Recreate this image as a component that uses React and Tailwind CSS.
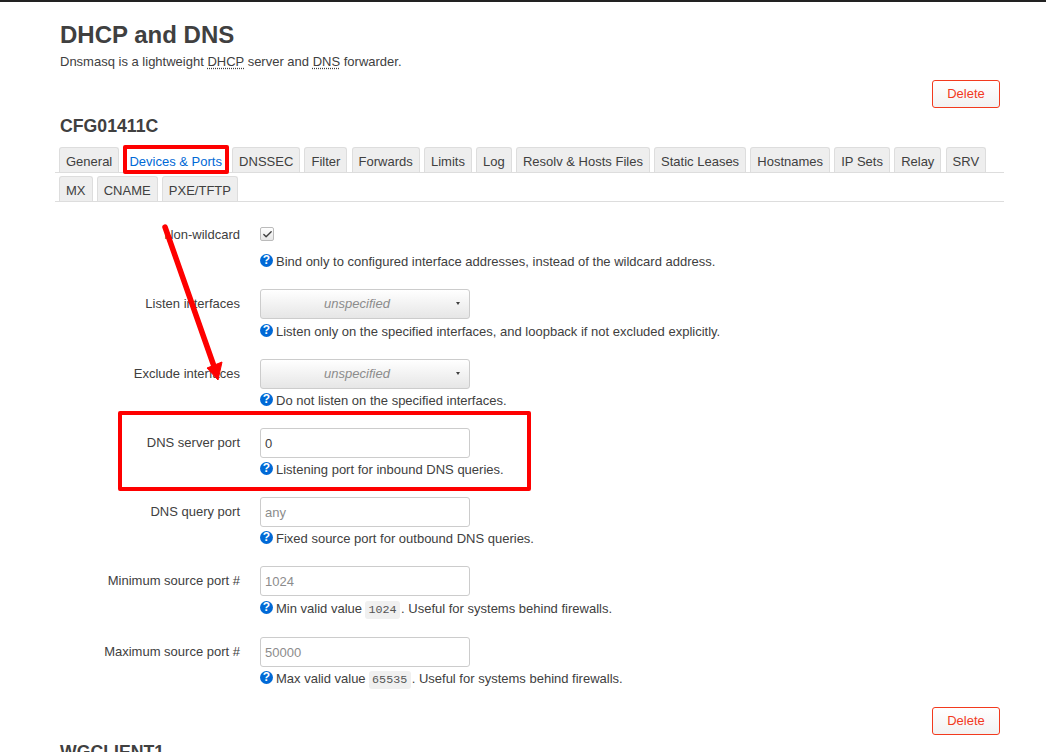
import React from 'react';
import { Check } from 'lucide-react';

const tabsRowOne = ['General', 'Devices & Ports', 'DNSSEC', 'Filter', 'Forwards', 'Limits', 'Log', 'Resolv & Hosts Files', 'Static Leases', 'Hostnames', 'IP Sets', 'Relay', 'SRV'];
const tabsRowTwo = ['MX', 'CNAME', 'PXE/TFTP'];

const HelpIcon = () => (
  <span className="mr-[3px] inline-flex h-[13px] w-[13px] shrink-0 -translate-y-[2px] items-center justify-center rounded-full bg-[#0069d6] text-[12px] font-bold leading-none text-white">?</span>
);

const Code = ({ children }) => (
  <code className="ml-[3px] mr-[1px] rounded-[3px] bg-[#f0f0f0] px-[3.5px] py-[2px] font-['Liberation_Mono',monospace] text-[11.7px] text-[#555]">{children}</code>
);

const Help = ({ top, children }) => (
  <div className={`${top} flex h-[20px] items-center whitespace-pre text-[13px] text-[#404040]`}>
    <HelpIcon />
    <span>{children}</span>
  </div>
);

const Tab = ({ label, active }) => (
  <li className={`mr-[4.2px] flex h-[25px] items-center rounded-t-[3px] border border-b-0 pt-[3px] text-[13px] ${active ? 'border-transparent bg-white px-[5px] text-[#0069d6]' : 'border-[#ddd] bg-[#eee] px-[6px] text-[#404040]'}`}>
    {label}
  </li>
);

const Row = ({ label, help, top, helpTop = 'mt-[2px]', children }) => (
  <div className={`flex ${top}`}>
    <label className="w-[185px] pt-[5px] text-right text-[13px] text-[#404040]">{label}</label>
    <div className="ml-[20px] w-[460px]">
      {children}
      <Help top={helpTop}>{help}</Help>
    </div>
  </div>
);

const TextField = ({ value, placeholder }) => (
  <div className={`flex h-[30px] w-[210px] items-center rounded-[3px] border border-[#ccc] bg-white px-[4px] pt-[1px] text-[13px] ${value ? 'text-[#404040]' : 'text-[#8c8c8c]'}`}>
    {value || placeholder}
  </div>
);

const SelectField = () => (
  <div className="relative flex h-[30px] w-[210px] items-center justify-center rounded-[3px] border border-[#ccc] bg-gradient-to-b from-white to-[#e6e6e6] pb-[1px] pr-[16px] text-[13px] italic text-[#8c8c8c]">
    unspecified
    <span className="absolute right-[9px] top-[12px] h-0 w-0 border-x-[2.5px] border-t-[3px] border-x-transparent border-t-[#404040]" />
  </div>
);

const DeleteButton = () => (
  <button className="h-[28px] w-[68px] rounded-[3px] border border-[#f23a1e] bg-gradient-to-b from-white to-[#f2f2f2] text-[13px] text-[#f23a1e]">Delete</button>
);

const App = () => (
  <div className="relative h-[752px] w-[1046px] overflow-hidden border-t-2 border-[#222] bg-white font-['Liberation_Sans',Arial,sans-serif]">
    <div className="ml-[55px] w-[949px]">
      <div className="pl-[5px]">
        <h2 className="pt-[19px] text-[24px] font-bold leading-[28px] text-[#404040]">DHCP and DNS</h2>
        <p className="mt-[4px] text-[13px] leading-[18px] text-[#404040]">
          Dnsmasq is a lightweight <abbr className="underline decoration-dotted underline-offset-2">DHCP</abbr> server and <abbr className="underline decoration-dotted underline-offset-2">DNS</abbr> forwarder.
        </p>
      </div>

      <div className="mr-[4px] mt-[9px] flex justify-end">
        <DeleteButton />
      </div>

      <h3 className="mt-[8px] pl-[5px] text-[17.7px] font-bold leading-[20px] text-[#404040]">CFG01411C</h3>

      <ul className="mt-[11px] flex border-b border-[#ddd] pl-[4px]">
        {tabsRowOne.map(t => <Tab key={t} label={t} active={t === 'Devices & Ports'} />)}
      </ul>
      <ul className="mt-[3px] flex border-b border-[#ddd] pl-[4px]">
        {tabsRowTwo.map(t => <Tab key={t} label={t} />)}
      </ul>

      <Row top="mt-[18px]" helpTop="mt-[3px]" label="Non-wildcard" help="Bind only to configured interface addresses, instead of the wildcard address.">
        <div className="flex h-[29px] items-start pt-[7px]">
          <span className="flex h-[14px] w-[14px] items-center justify-center rounded-[2px] border border-[#bbb] bg-gradient-to-b from-white to-[#e6e6e6]">
            <Check size={11} strokeWidth={3} color="#404040" />
          </span>
        </div>
      </Row>
      <Row top="mt-[17px]" helpTop="mt-[3px]" label="Listen interfaces" help="Listen only on the specified interfaces, and loopback if not excluded explicitly.">
        <SelectField />
      </Row>
      <Row top="mt-[17px]" label="Exclude interfaces" help="Do not listen on the specified interfaces.">
        <SelectField />
      </Row>
      <Row top="mt-[17px]" label="DNS server port" help="Listening port for inbound DNS queries.">
        <TextField value="0" />
      </Row>
      <Row top="mt-[17px]" label="DNS query port" help="Fixed source port for outbound DNS queries.">
        <TextField placeholder="any" />
      </Row>
      <Row top="mt-[17px]" helpTop="mt-[3px]" label="Minimum source port #" help={<>Min valid value<Code>1024</Code>. Useful for systems behind firewalls.</>}>
        <TextField placeholder="1024" />
      </Row>
      <Row top="mt-[18px]" label="Maximum source port #" help={<>Max valid value<Code>65535</Code>. Useful for systems behind firewalls.</>}>
        <TextField placeholder="50000" />
      </Row>

      <div className="mr-[4px] mt-[18px] flex justify-end">
        <DeleteButton />
      </div>
      <h3 className="mt-[7px] pl-[5px] text-[17.7px] font-bold leading-[20px] text-[#404040]">WGCLIENT1</h3>
    </div>

    {/* red annotations drawn over the page */}
    <div className="absolute left-[123px] top-[143px] h-[29px] w-[106px] rounded-[2px] border-[4px] border-[#fe0000]" />
    <div className="absolute left-[118px] top-[409px] h-[80px] w-[413px] rounded-[2px] border-[4px] border-[#fe0000]" />
    <svg className="absolute left-0 top-[-2px]" width="1046" height="752" fill="none">
      <path d="M165 227 L216 372" stroke="#fe0000" strokeWidth="5.5" strokeLinecap="round" />
      <path d="M207 368 L218 380 L222 362 Z" fill="#fe0000" stroke="#fe0000" strokeWidth="1" />
    </svg>
  </div>
);

export default App;
